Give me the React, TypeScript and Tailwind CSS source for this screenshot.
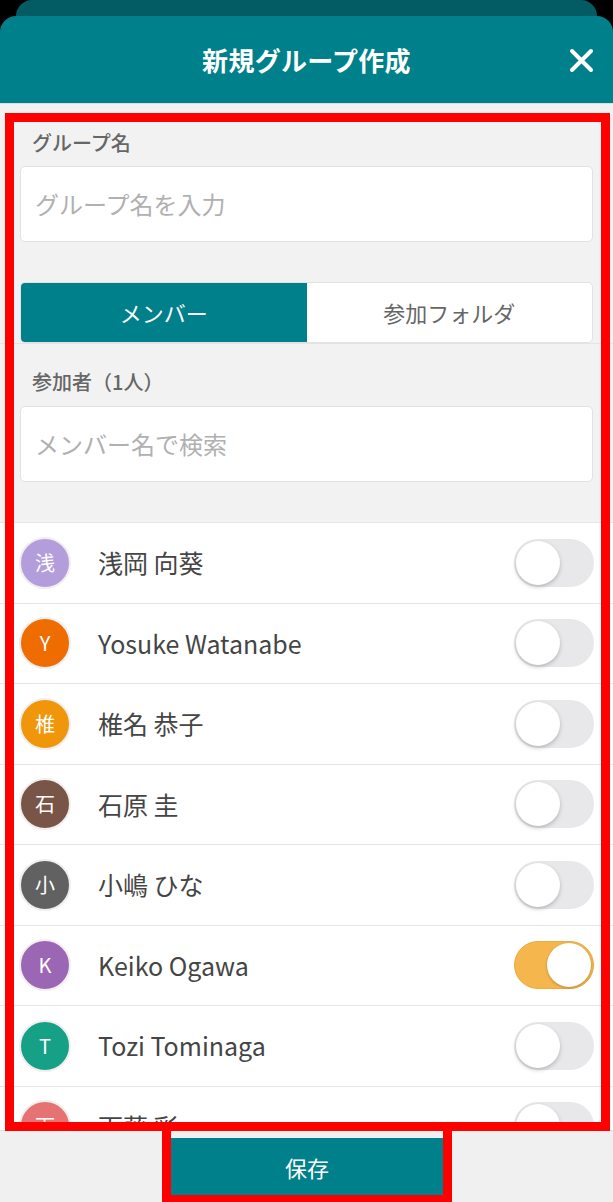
import React from "react";

const members = [
  { initial: "浅", name: "浅岡 向葵", color: "bg-[#b39ddb]", on: false },
  { initial: "Y", name: "Yosuke Watanabe", color: "bg-[#ef6c00]", on: false },
  { initial: "椎", name: "椎名 恭子", color: "bg-[#f0960a]", on: false },
  { initial: "石", name: "石原 圭", color: "bg-[#795548]", on: false },
  { initial: "小", name: "小嶋 ひな", color: "bg-[#616161]", on: false },
  { initial: "K", name: "Keiko Ogawa", color: "bg-[#9b67b4]", on: true },
  { initial: "T", name: "Tozi Tominaga", color: "bg-[#16a086]", on: false },
  { initial: "下", name: "下藤 彩", color: "bg-[#e57373]", on: false },
];

function Toggle({ on }: { on: boolean }) {
  return (
    <div
      className={
        on
          ? "relative h-[48px] w-[80px] shrink-0 rounded-full bg-[#f6b64e] border border-[#eeaa3c]"
          : "relative h-[48px] w-[80px] shrink-0 rounded-full bg-[#e8e8ea]"
      }
    >
      <div
        className={
          on
            ? "absolute right-[2px] top-[1px] h-[44px] w-[44px] rounded-full bg-white shadow-[0_1px_3px_rgba(0,0,0,0.25)]"
            : "absolute left-[2px] top-[2px] h-[44px] w-[44px] rounded-full bg-white shadow-[0_2px_4px_rgba(0,0,0,0.22)]"
        }
      />
    </div>
  );
}

export default function App() {
  return (
    <div
      className="relative flex h-[1202px] w-[613px] flex-col overflow-hidden bg-black"
      style={{ fontFamily: '"Noto Sans CJK JP", "Noto Sans", sans-serif' }}
    >
      {/* back card */}
      <div className="h-[16px] shrink-0 px-[16px] pr-[16px]">
        <div className="h-[24px] rounded-t-[16px] bg-[#035b63]" />
      </div>
      {/* header */}
      <div className="relative z-10 flex h-[87px] shrink-0 items-center justify-center rounded-t-[16px] bg-[#00808a]">
        <div className="text-[26px] font-bold leading-none tracking-[0.3px] text-white">新規グループ作成</div>
        <svg
          className="absolute right-[19px] top-[32px]"
          width="25"
          height="25"
          viewBox="0 0 25 25"
          fill="none"
          stroke="white"
          strokeWidth="4"
          strokeLinecap="round"
        >
          <path d="M3 3 L22 22 M22 3 L3 22" />
        </svg>
      </div>
      {/* body */}
      <div className="flex min-h-0 flex-1 flex-col overflow-hidden border-t border-[#dcdcdc] bg-[#f2f2f2]">
        <div className="px-[20px] pt-[25px]">
          <div className="pl-[12px] text-[20px] font-medium leading-[28px] text-[#666]">グループ名</div>
          <div className="mt-[9px] flex h-[76px] items-center rounded-[5px] border border-[#e2e2e2] bg-white pl-[14px] text-[24px] text-[#b0b0b0]">
            グループ名を入力
          </div>
        </div>
        <div className="mt-[40px] border-b border-[#e4e4e4] px-[20px]">
          <div className="flex h-[61px] overflow-hidden rounded-[5px] border border-[#e2e2e2] bg-white">
            <div className="flex flex-1 items-center justify-center bg-[#00808a] text-[22px] text-white">メンバー</div>
            <div className="flex flex-1 items-center justify-center text-[22px] text-[#666]">参加フォルダ</div>
          </div>
        </div>
        <div className="px-[20px] pt-[24px]">
          <div className="pl-[12px] text-[20px] font-medium leading-[28px] text-[#666]">参加者（1人）</div>
          <div className="mt-[10px] flex h-[76px] items-center rounded-[5px] border border-[#e2e2e2] bg-white pl-[14px] text-[24px] text-[#b0b0b0]">
            メンバー名で検索
          </div>
        </div>
        <div className="mt-[40px] flex flex-col border-t border-[#e6e6e6] bg-white">
          {members.map((m) => (
            <div
              key={m.name}
              className="flex h-[80.5px] shrink-0 items-center border-b border-[#e6e6e6] pl-[19px] pr-[19px]"
            >
              <div
                className={`flex h-[52px] w-[52px] shrink-0 items-center justify-center rounded-full border-2 border-[#f2eeee] text-[20px] text-white ${m.color}`}
              >
                {m.initial}
              </div>
              <div className="ml-[27px] flex-1 text-[25px] text-[#454545]">{m.name}</div>
              <Toggle on={m.on} />
            </div>
          ))}
        </div>
      </div>
      {/* footer */}
      <div className="flex h-[72px] shrink-0 justify-center border-t border-[#dcdcdc] bg-[#f0f0f0] pt-[7px]">
        <div className="ml-[1px] flex h-[59px] w-[272px] items-center justify-center bg-[#00808a] text-[22px] text-white">
          保存
        </div>
      </div>
      {/* annotation frames */}
      <div className="pointer-events-none absolute left-[5px] top-[113px] h-[1018px] w-[605px] border-[9px] border-[#ff0000]" />
      <div className="pointer-events-none absolute left-[162px] top-[1122px] h-[82px] w-[290px] border-[9px] border-[#ff0000]" />
    </div>
  );
}
